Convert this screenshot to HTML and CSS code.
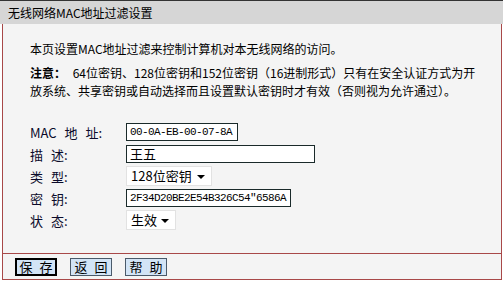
FILE: index.html
```html
<!DOCTYPE html>
<html>
<head>
<meta charset="utf-8">
<link rel="stylesheet" href="styles.css">
</head>
<body>
<div class="page">
  <div class="header">无线网络MAC地址过滤设置</div>
  <div class="panel">
    <div class="content">
      <p class="intro">本页设置MAC地址过滤来控制计算机对本无线网络的访问。</p>
      <p class="note"><b>注意：</b> 64位密钥、128位密钥和152位密钥（16进制形式）只有在安全认证方式为开<br>放系统、共享密钥或自动选择而且设置默认密钥时才有效（否则视为允许通过）。</p>
      <div class="form">
        <div class="row"><span class="label">MAC 地 址:</span><span class="input mono w-mac">00-0A-EB-00-07-8A</span></div>
        <div class="row"><span class="label">描 述:</span><span class="input w-desc">王五</span></div>
        <div class="row"><span class="label">类 型:</span><span class="select w-type">128位密钥<i class="arrow"></i></span></div>
        <div class="row"><span class="label">密 钥:</span><span class="input mono w-key">2F34D20BE2E54B326C54"6586A</span></div>
        <div class="row"><span class="label">状 态:</span><span class="select w-state">生效<i class="arrow"></i></span></div>
      </div>
    </div>
    <div class="buttons">
      <span class="btn default">保 存</span>
      <span class="btn">返 回</span>
      <span class="btn">帮 助</span>
    </div>
  </div>
</div>
</body>
</html>
```
FILE: styles.css
```css
html, body {
  margin: 0;
  padding: 0;
  background: #ffffff;
}
.page {
  width: 503px;
  height: 282px;
  font-family: "Noto Sans CJK SC", "Liberation Sans", sans-serif;
  font-size: 12px;
  color: #000;
  overflow: hidden;
}
.header {
  height: 23px;
  line-height: 23px;
  border-top: 1px solid #333;
  background: #d6d6d6;
  padding-left: 8px;
  color: #000;
}
.panel {
  margin: 0 1px 0 2px;
  border-left: 1px solid #a84848;
  border-right: 1px solid #a84848;
  border-bottom: 1px solid #a84848;
  background: #f4f4f4;
}
.content {
  padding: 16px 0 22px 27px;
  border-bottom: 1px solid #a84848;
}
.intro, .note {
  margin: 0;
  line-height: 18px;
  white-space: nowrap;
}
.note {
  margin-top: 6px;
}
.note b {
  font-weight: bold;
  margin-right: 4px;
}
.form {
  margin-top: 21px;
  display: flex;
  flex-direction: column;
}
.row {
  height: 22px;
  display: flex;
  align-items: center;
}
.label {
  width: 96px;
  flex: none;
  color: #0a0a2a;
  word-spacing: 5px;
  font-size: 13px;
}
.input {
  box-sizing: border-box;
  height: 18px;
  line-height: 16px;
  border: 1px solid #1a2a2a;
  background: #fff;
  padding: 0 3px;
  white-space: nowrap;
}
.mono {
  font-family: "Liberation Mono", "DejaVu Sans Mono", monospace;
  font-size: 11px;
  letter-spacing: -0.6px;
}
.w-mac { width: 112px; }
.w-desc { width: 189px; font-size: 13px; }
.w-key { width: 165px; }
.select {
  box-sizing: border-box;
  height: 20px;
  line-height: 18px;
  border: 1px solid #e2e2e2;
  background: #fff;
  padding: 0 4px;
  position: relative;
  font-size: 13px;
}
.w-type { width: 86px; }
.w-state { width: 50px; }
.arrow {
  position: absolute;
  right: 6px;
  top: 8px;
  width: 0;
  height: 0;
  border-left: 4px solid transparent;
  border-right: 4px solid transparent;
  border-top: 4px solid #000;
}
.buttons {
  height: 25px;
  display: flex;
  align-items: center;
  gap: 13px;
  padding-left: 12px;
}
.btn {
  box-sizing: border-box;
  width: 42px;
  height: 18px;
  line-height: 16px;
  text-align: center;
  background: #d2e4f6;
  border: 1px solid #4a5a6a;
  font-size: 13px;
  word-spacing: 4px;
}
.btn.default {
  border: 2px solid #000;
  line-height: 14px;
}
```
